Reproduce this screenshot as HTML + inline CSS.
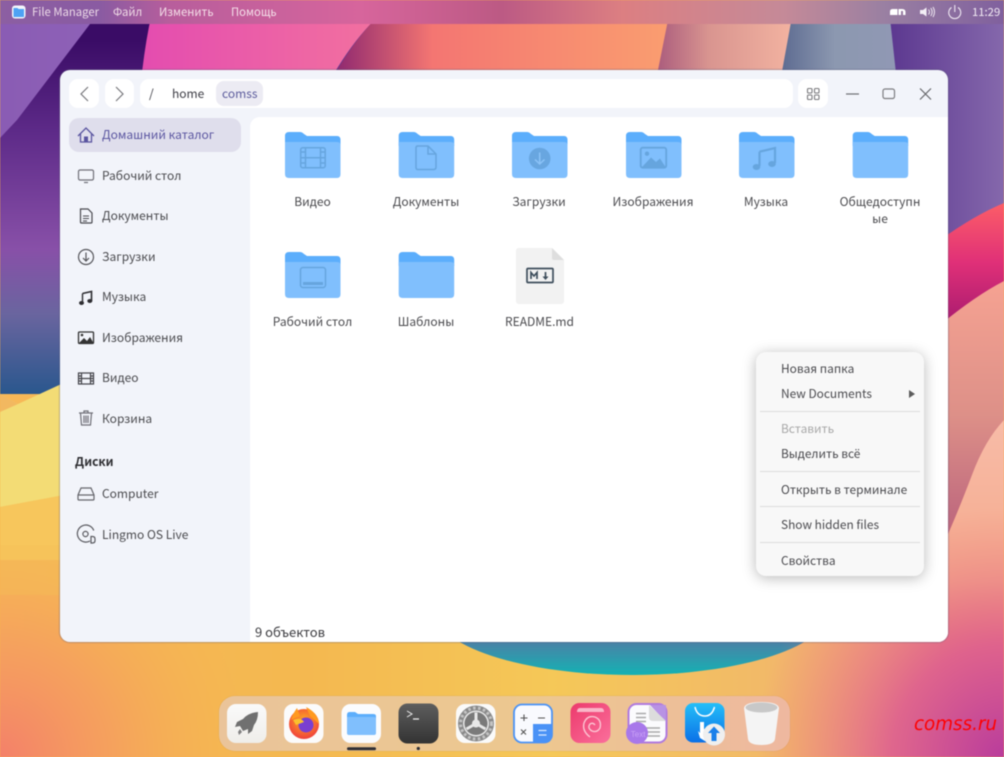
<!DOCTYPE html>
<html lang="ru"><head><meta charset="utf-8"><title>File Manager</title>
<style>
html,body{margin:0;padding:0;width:1004px;height:757px;overflow:hidden;background:#f5b050}
body{position:relative;font-family:"Noto Sans CJK SC","Liberation Sans",sans-serif;font-size:12px;color:#4a4a4e}
#root{position:absolute;left:0;top:0;width:1004px;height:757px;overflow:hidden;filter:blur(.4px)}
.a{position:absolute;white-space:nowrap}
.t{position:absolute;white-space:nowrap;line-height:18px;height:18px;margin-top:1px}
.m{font-size:11.3px;top:3px;margin-top:0}
.c{font-size:11.9px}
.l{width:100px;text-align:center}
#bg,#ic{position:absolute;left:0;top:0}
.btn{position:absolute;background:#fff;border-radius:9px}
</style></head><body><div id="root">
<svg id="bg" width="1004" height="757" viewBox="0 0 1004 757">
<defs>
<linearGradient id="g0" x1="0" y1="0" x2="1" y2="0"><stop offset="0" stop-color="#8a5cb4"/><stop offset="1" stop-color="#8f62b8"/></linearGradient>
<linearGradient id="gd" x1="0" y1="40" x2="0" y2="400" gradientUnits="userSpaceOnUse"><stop offset="0" stop-color="#3a0c66"/><stop offset=".25" stop-color="#5d2a88"/><stop offset=".58" stop-color="#8850a8"/><stop offset=".76" stop-color="#6a659f"/><stop offset="1" stop-color="#25568c"/></linearGradient>
<linearGradient id="gp" x1="140" y1="0" x2="370" y2="0" gradientUnits="userSpaceOnUse"><stop offset="0" stop-color="#e44cb0"/><stop offset="1" stop-color="#f270a0"/></linearGradient>
<linearGradient id="go" x1="335" y1="0" x2="660" y2="0" gradientUnits="userSpaceOnUse"><stop offset="0" stop-color="#8e2870"/><stop offset=".3" stop-color="#f47672"/><stop offset="1" stop-color="#fa9c70"/></linearGradient>
<linearGradient id="gs" x1="655" y1="0" x2="790" y2="0" gradientUnits="userSpaceOnUse"><stop offset="0" stop-color="#a95a7c"/><stop offset=".4" stop-color="#d99590"/><stop offset="1" stop-color="#f2b2a0"/></linearGradient>
<linearGradient id="gb" x1="780" y1="0" x2="890" y2="0" gradientUnits="userSpaceOnUse"><stop offset="0" stop-color="#5c6a90"/><stop offset=".5" stop-color="#8c98b0"/><stop offset="1" stop-color="#9098b4"/></linearGradient>
<linearGradient id="gv" x1="890" y1="0" x2="1004" y2="0" gradientUnits="userSpaceOnUse"><stop offset="0" stop-color="#5c3890"/><stop offset="1" stop-color="#8568ac"/></linearGradient>
<linearGradient id="gr" x1="0" y1="205" x2="0" y2="320" gradientUnits="userSpaceOnUse"><stop offset="0" stop-color="#fb5c68"/><stop offset=".5" stop-color="#e03078"/><stop offset="1" stop-color="#ac1c70"/></linearGradient>
<linearGradient id="gsa" x1="0" y1="285" x2="0" y2="545" gradientUnits="userSpaceOnUse"><stop offset="0" stop-color="#f5a292"/><stop offset=".5" stop-color="#dd9088"/><stop offset="1" stop-color="#b8607c"/></linearGradient>
<linearGradient id="gl" x1="0" y1="420" x2="0" y2="690" gradientUnits="userSpaceOnUse"><stop offset="0" stop-color="#f8bca8"/><stop offset=".6" stop-color="#f5aa8c"/><stop offset=".82" stop-color="#f08c7a"/><stop offset="1" stop-color="#f08478" stop-opacity="0"/></linearGradient>
<linearGradient id="gb2" x1="0" y1="0" x2="1004" y2="0" gradientUnits="userSpaceOnUse"><stop offset="0" stop-color="#f7b858"/><stop offset=".3" stop-color="#f4b850"/><stop offset=".55" stop-color="#f5c858"/><stop offset=".76" stop-color="#f2ba68"/><stop offset=".88" stop-color="#f2a47c"/><stop offset="1" stop-color="#ec7c7e"/></linearGradient>
<linearGradient id="gt" x1="0" y1="642" x2="0" y2="675" gradientUnits="userSpaceOnUse"><stop offset="0" stop-color="#4a82a6"/><stop offset="1" stop-color="#14b2b4"/></linearGradient>
<linearGradient id="gm" x1="0" y1="0" x2="1" y2="0"><stop offset="0" stop-color="#8c5fa2"/><stop offset=".1" stop-color="#8a5ba2"/><stop offset=".17" stop-color="#b85e9c"/><stop offset=".36" stop-color="#d7659c"/><stop offset=".5" stop-color="#bc5a84"/><stop offset=".62" stop-color="#dc7f82"/><stop offset=".78" stop-color="#c58a98"/><stop offset=".88" stop-color="#9a80a2"/><stop offset="1" stop-color="#80609e"/></linearGradient>
<radialGradient id="rl" cx="0" cy="757" r="250" gradientUnits="userSpaceOnUse"><stop offset="0" stop-color="#f4806a"/><stop offset=".45" stop-color="#f59a60" stop-opacity=".75"/><stop offset="1" stop-color="#f6b050" stop-opacity="0"/></radialGradient>
<radialGradient id="rr" cx="1004" cy="757" r="250" gradientUnits="userSpaceOnUse"><stop offset="0" stop-color="#b93c9c"/><stop offset=".45" stop-color="#dc5c90" stop-opacity=".85"/><stop offset="1" stop-color="#f08478" stop-opacity="0"/></radialGradient>
</defs>
<rect width="1004" height="757" fill="url(#gb2)"/>
<!-- top bands -->
<rect x="0" y="0" width="1004" height="420" fill="url(#gv)"/>
<path d="M795 0L770 110H900L888 0Z" fill="url(#gb)"/>
<path d="M668 0L640 110H775L795 0Z" fill="url(#gs)"/>
<path d="M385 10Q350 40 315 110H650L672 0H385Z" fill="url(#go)"/>
<path d="M152 0Q142 40 138 110H315Q345 45 385 10L395 0Z" fill="url(#gp)"/>
<path d="M0 130L105 0H155Q142 50 138 120V420H0Z" fill="url(#gd)"/>
<path d="M0 0H108L90 24L17 120L0 138Z" fill="url(#g0)"/>
<!-- left lower -->
<rect x="0" y="394" width="70" height="363" fill="url(#gb2)"/>
<rect x="0" y="390" width="500" height="367" fill="url(#rl)"/>
<path d="M0 394L18 404L70 380V494L0 507Z" fill="#f3dc75"/>
<path d="M0 394L18 404L0 412Z" fill="#f2b860"/>
<path d="M0 507L70 494V560H0Z" fill="#f7c65c"/>
<rect x="0" y="545" width="70" height="50" fill="#f6bd58" opacity=".4"/>
<!-- right waves -->
<path d="M940 240Q975 215 1004 203V290L940 325Z" fill="url(#gr)"/>
<path d="M940 325Q975 296 1004 281V425Q985 440 972 475Q955 520 940 552Z" fill="url(#gsa)"/>
<rect x="900" y="420" width="104" height="280" fill="url(#gb2)" clip-path="path('M104 0Q85 20 72 55Q55 100 40 132V280H104Z')"/>
<path d="M1004 420Q985 440 972 475Q955 520 940 552V690H1004Z" fill="url(#gl)"/>
<ellipse cx="632" cy="610" rx="198" ry="65" fill="url(#gt)"/>
<rect x="754" y="507" width="250" height="250" fill="url(#rr)"/>
<rect width="1004" height="24" fill="url(#gm)"/>
</svg>

<!-- menu bar -->
<div class="t m" style="left:32px;color:#eddbe8">File Manager</div>
<div class="t m" style="left:113px;color:#f0dbe6">Файл</div>
<div class="t m" style="left:159px;color:#f4dfe8">Изменить</div>
<div class="t m" style="left:231px;color:#f5e1ea">Помощь</div>
<div class="t m" style="left:972px;color:#f2ebf4">11:29</div>

<!-- window -->
<div class="a" style="left:60px;top:70px;width:888px;height:572px;background:#f2f4fa;border-radius:10px;box-shadow:0 0 1px 1px rgba(90,90,120,.35);overflow:hidden">
  <div class="a" style="left:190px;top:47px;width:698px;height:525px;background:#fff;border-top-left-radius:10px"></div>
</div>
<div class="btn" style="left:69px;top:79px;width:30px;height:29px"></div>
<div class="btn" style="left:105px;top:79px;width:29px;height:29px"></div>
<div class="btn" style="left:140px;top:79px;width:653px;height:29px"></div>
<div class="btn" style="left:798px;top:79px;width:30px;height:29px"></div>
<div class="a" style="left:216px;top:81px;width:47px;height:25px;background:#ecebf3;border-radius:8px"></div>
<div class="t" style="left:149px;top:84px;color:#3c3c44">/</div>
<div class="t" style="left:172px;top:84px;color:#3c3c44">home</div>
<div class="t" style="left:222px;top:84px;color:#5b5b9c">comss</div>

<!-- sidebar -->
<div class="a" style="left:69px;top:118px;width:172px;height:34px;background:#dfdeec;border-radius:10px"></div>
<div class="t" style="left:102px;top:125px;color:#5a55a0">Домашний каталог</div>
<div class="t" style="left:102px;top:166px">Рабочий стол</div>
<div class="t" style="left:102px;top:206px">Документы</div>
<div class="t" style="left:102px;top:247px">Загрузки</div>
<div class="t" style="left:102px;top:287px">Музыка</div>
<div class="t" style="left:102px;top:328px">Изображения</div>
<div class="t" style="left:102px;top:368px">Видео</div>
<div class="t" style="left:102px;top:409px">Корзина</div>
<div class="t" style="left:75px;top:452px;font-weight:700;color:#2e2e32">Диски</div>
<div class="t" style="left:102px;top:484px">Computer</div>
<div class="t" style="left:102px;top:525px">Lingmo OS Live</div>

<!-- file labels -->
<div class="t l" style="left:262.500px;top:192px">Видео</div>
<div class="t l" style="left:376px;top:192px">Документы</div>
<div class="t l" style="left:489px;top:192px">Загрузки</div>
<div class="t l" style="left:603px;top:192px">Изображения</div>
<div class="t l" style="left:716px;top:192px">Музыка</div>
<div class="t l" style="left:830px;top:192px">Общедоступн</div>
<div class="t l" style="left:830px;top:209px">ые</div>
<div class="t l" style="left:262.500px;top:312px">Рабочий стол</div>
<div class="t l" style="left:376px;top:312px">Шаблоны</div>
<div class="t l" style="left:489.500px;top:312px">README.md</div>
<div class="t" style="left:255px;top:623px;margin-top:0;color:#3c3c40;font-size:13px">9 объектов</div>

<!-- context menu -->
<div class="a" style="left:756px;top:352px;width:168px;height:224px;background:#f8f8f8;border-radius:10px;box-shadow:0 2px 14px rgba(0,0,0,.28)"></div>
<div class="t c" style="left:781px;top:359px">Новая папка</div>
<div class="t c" style="left:781px;top:384px">New Documents</div>
<div class="t c" style="left:781px;top:419px;color:#a8a8a8">Вставить</div>
<div class="t c" style="left:781px;top:444px">Выделить всё</div>
<div class="t c" style="left:781px;top:480px">Открыть в терминале</div>
<div class="t c" style="left:781px;top:515px">Show hidden files</div>
<div class="t c" style="left:781px;top:551px">Свойства</div>
<div class="a" style="left:760px;top:411px;width:160px;height:1px;background:#dcdcdc"></div>
<div class="a" style="left:760px;top:471px;width:160px;height:1px;background:#dcdcdc"></div>
<div class="a" style="left:760px;top:506px;width:160px;height:1px;background:#dcdcdc"></div>
<div class="a" style="left:760px;top:542px;width:160px;height:1px;background:#dcdcdc"></div>

<!-- dock -->
<div class="a" style="left:219px;top:696px;width:571px;height:55px;background:linear-gradient(90deg,#eac49a,#edc88f 55%,#eeb8a0);border-radius:16px;box-shadow:0 0 1px rgba(120,80,40,.3)"></div>

<svg id="ic" width="1004" height="757" viewBox="0 0 1004 757">
<defs>
<linearGradient id="dt" x1="0" y1="0" x2="0" y2="1"><stop offset="0" stop-color="#5e5e5e"/><stop offset="1" stop-color="#333"/></linearGradient>
<linearGradient id="dp" x1="0" y1="0" x2="1" y2="1"><stop offset="0" stop-color="#ec3a6c"/><stop offset="1" stop-color="#fb6f9c"/></linearGradient>
<linearGradient id="ds" x1="0" y1="0" x2="0" y2="1"><stop offset="0" stop-color="#25c0f8"/><stop offset="1" stop-color="#0a70e8"/></linearGradient>
<linearGradient id="dr" x1="0" y1="0" x2="0" y2="1"><stop offset="0" stop-color="#fafafa"/><stop offset="1" stop-color="#efeeea"/></linearGradient>
<radialGradient id="ff" cx=".5" cy=".4" r=".6"><stop offset="0" stop-color="#ffb020"/><stop offset="1" stop-color="#f0403c"/></radialGradient>
<g id="fo"><path d="M0 4Q0 0 4 0H15Q17 0 19 2L22 4H52Q55.500 4 55.500 8V14H0Z" fill="#5caefc"/><path d="M0 10H52Q55.500 10 55.500 13V42Q55.500 46 52 46H4Q0 46 0 42Z" fill="#80bffd"/></g>
</defs>

<!-- tray / menu app icon -->
<rect x="12" y="5.500" width="13.500" height="13" rx="3" fill="#f3f6fb"/>
<path d="M13.500 8H17.500L18.500 9H24V17H13.500Z" fill="#4ea2f4"/>
<path d="M890 15V11.500Q890 9 893 9H897.500V15ZM898.500 15V9H902Q905.500 9 905.500 12V15H903V11H901V15Z" fill="#fff"/>
<path d="M920 10H923L926.500 7.500V16.500L923 14H920Z" fill="#f3eef5"/>
<path d="M928.500 9.500Q930.500 12 928.500 14.500M930.800 8Q933.500 12 930.800 16M933 7Q936 12 933 17" fill="none" stroke="#efe8f2" stroke-width="1"/>
<path d="M951.500 7.500A6 6 0 1 0 958 7.500M954.800 5V12" fill="none" stroke="#efe8f2" stroke-width="1.100"/>

<!-- toolbar icons -->
<path d="M88 87L81 94L88 101" fill="none" stroke="#77777c" stroke-width="1.200"/>
<path d="M116 87L123 94L116 101" fill="none" stroke="#77777c" stroke-width="1.200"/>
<g fill="none" stroke="#7a7a7e" stroke-width="1.100"><rect x="807.500" y="88.500" width="4.500" height="4.500" rx="1"/><rect x="814.500" y="88.500" width="4.500" height="4.500" rx="1"/><rect x="807.500" y="95" width="4.500" height="4.500" rx="1"/><rect x="814.500" y="95" width="4.500" height="4.500" rx="1"/></g>
<path d="M846 94H859" stroke="#6e6e72" stroke-width="1.200"/>
<rect x="883" y="89" width="11.500" height="9.500" rx="2" fill="none" stroke="#7c7c80" stroke-width="1.200"/>
<path d="M920 88.500L931 99.500M931 88.500L920 99.500" stroke="#66666a" stroke-width="1.200"/>

<!-- sidebar icons -->
<g fill="none" stroke="#5a55a0" stroke-width="1.300"><path d="M78 136L86 128L94 136"/><path d="M80.500 134V142H91.500V134"/></g><rect x="84" y="136.500" width="4" height="5.500" fill="#5a55a0"/>
<g fill="none" stroke="#707078" stroke-width="1.200"><rect x="78.500" y="170" width="15" height="10" rx="1.500"/><path d="M84 182.500H88"/></g>
<g fill="none" stroke="#4a4a50" stroke-width="1.200"><path d="M80.500 209H88L92 213V222Q92 223 91 223H81.500Q80.500 223 80.500 222Z"/><path d="M83 216H89M83 218.500H89M83 221H87" stroke-width=".9"/></g>
<g fill="none" stroke="#55555a" stroke-width="1.200"><circle cx="86" cy="257" r="7.500"/><path d="M86 252.500V260.500M83 258L86 261L89 258"/></g>
<path d="M82.500 293.500L91.500 291.500V301" fill="none" stroke="#2e2e32" stroke-width="1.600"/><ellipse cx="81.500" cy="303" rx="2.500" ry="2" fill="#2e2e32"/><ellipse cx="89.800" cy="301" rx="2.500" ry="2" fill="#2e2e32"/><path d="M82.500 293.500V303" stroke="#2e2e32" stroke-width="1.400"/>
<rect x="78.500" y="332" width="15" height="11.500" rx="1" fill="none" stroke="#333" stroke-width="1.300"/><circle cx="82" cy="335" r="1.300" fill="#333"/><path d="M79 343L84 338L87 341L90 337L93.500 343Z" fill="#333"/>
<g fill="none" stroke="#44444a" stroke-width="1.200"><rect x="78.500" y="373" width="15" height="11"/><path d="M81.500 373V384M90.500 373V384M78.500 378.500H93.500M78.500 376H81.500M78.500 381H81.500M90.500 376H93.500M90.500 381H93.500"/></g>
<g fill="none" stroke="#707078" stroke-width="1.200"><path d="M79 413H93M84 413V411H88V413M80.500 413L81.500 425H90.500L91.500 413M84 415.500V423M86 415.500V423M88 415.500V423"/></g>
<g fill="none" stroke="#66666c" stroke-width="1.200"><path d="M81 488H91L94 495V499Q94 500 93 500H79Q78 500 78 499V495ZM78 495H94"/></g>
<g fill="none" stroke="#5a5a60" stroke-width="1.200"><path d="M90 541A8.500 8.500 0 1 1 93.800 530.500"/><circle cx="85.500" cy="534" r="2.600"/><path d="M91 536.500H92.500Q95 536.500 95 539V540.500Q95 543 92.500 543H91Z"/></g>

<!-- folders -->
<use href="#fo" x="285" y="132"/><use href="#fo" x="398.700" y="132"/><use href="#fo" x="512" y="132"/><use href="#fo" x="626" y="132"/><use href="#fo" x="739" y="132"/><use href="#fo" x="852.700" y="132"/>
<use href="#fo" x="285" y="252"/><use href="#fo" x="398.700" y="252"/>
<!-- folder glyphs -->
<g fill="none" stroke="#66a5de" stroke-width="1.500"><rect x="300.700" y="147.700" width="24.500" height="20" rx="2"/><path d="M305.500 148V167.500M320.500 148V167.500M305.500 157.700H320.500M301 152H305.500M301 157.700H305.500M301 163H305.500M320.500 152H325M320.500 157.700H325M320.500 163H325"/></g>
<path d="M417.500 146H428L436 154V167Q436 169.500 433.500 169.500H417.500Q416 169.500 416 167V148Q416 146 417.500 146ZM428 146V154H436" fill="none" stroke="#66a5de" stroke-width="1.500"/>
<circle cx="539.700" cy="158.500" r="10.800" fill="#68a6e0"/><path d="M539.700 152.500V164M535 159.500L539.700 164L544.500 159.500" fill="none" stroke="#8cc3f8" stroke-width="1.500"/>
<rect x="640.700" y="147.700" width="25.500" height="20" rx="2" fill="none" stroke="#66a5de" stroke-width="1.800"/><circle cx="647" cy="153.700" r="2.200" fill="#66a5de"/><path d="M642 167L651 157.500L656 162L660 158.500L665.500 167Z" fill="#66a5de"/>
<path d="M759.500 151.700L775 148V163M759.500 151.700V166" fill="none" stroke="#66a5de" stroke-width="2.200"/><ellipse cx="756.500" cy="167" rx="3.800" ry="3" fill="#66a5de"/><ellipse cx="772" cy="164" rx="3.800" ry="3" fill="#66a5de"/>
<rect x="300.500" y="267.500" width="25" height="20" rx="2.500" fill="none" stroke="#66a5de" stroke-width="1.500"/><rect x="303" y="282" width="20" height="3" fill="#66a5de"/>

<!-- README -->
<path d="M518.500 248H552L564 260V301Q564 304 561 304H519Q516 304 516 301V251Q516 248 518.500 248Z" fill="#f2f2f2"/>
<path d="M552 248L564 260H554Q552 260 552 258Z" fill="#dedede"/>
<rect x="527" y="268.500" width="26" height="14" rx="1" fill="none" stroke="#3e4e5c" stroke-width="1.700"/>
<path d="M531 279V272.500L534 276L537 272.500V279" fill="none" stroke="#3e4e5c" stroke-width="1.700"/>
<path d="M545.500 272V277.500" stroke="#3e4e5c" stroke-width="1.700"/><path d="M542.500 276.500H548.500L545.500 280Z" fill="#3e4e5c"/>
<!-- submenu arrow -->
<path d="M909 390L915 394L909 398Z" fill="#5c5c5c"/>

<!-- dock icons -->
<rect x="227" y="704" width="39.500" height="39" rx="9" fill="url(#dr)"/>
<path d="M258 712Q248 713 243 719L237 722L235 727L240 726L243 731L248 729L248 734L252 731L254 725Q258 720 258 712Z" fill="#707070"/><path d="M238 732L240 729L242 732L239 735Z" fill="#808080"/>
<rect x="284" y="704" width="39.500" height="39" rx="9" fill="#fbfbfb"/>
<circle cx="304" cy="724" r="15" fill="url(#ff)"/><path d="M297 708Q292 715 291 720L300 716ZM306 707Q318 713 319 724L310 716Z" fill="#ff9a20"/><circle cx="306" cy="725" r="7.500" fill="#7a3fd0"/><path d="M293 720Q301 717 304 722L296 725Z" fill="#fbc02d"/>
<rect x="341.500" y="704" width="39.500" height="39" rx="9" fill="#fbfcfe"/>
<path d="M347 715Q347 712 349.500 712H355L358 714H373Q376 714 376 716V720H347Z" fill="#5caefc"/><path d="M347 717H374Q376 717 376 719V733Q376 735 374 735H349Q347 735 347 733Z" fill="#80bffd"/>
<rect x="398.500" y="703.500" width="40" height="40" rx="9" fill="url(#dt)"/>
<path d="M407 711L412 714L407 717" fill="none" stroke="#eee" stroke-width="1"/><path d="M413 719H419" stroke="#eee" stroke-width="1.300"/>
<rect x="456" y="704" width="39.500" height="39" rx="9" fill="#fafafa"/>
<circle cx="476" cy="723.500" r="18" fill="#8a8a8a"/><circle cx="476" cy="723.500" r="15.500" fill="none" stroke="#c4c4c4" stroke-width="3" stroke-dasharray="2.500 2.500"/><circle cx="476" cy="723.500" r="13" fill="#e8e8e8"/><circle cx="476" cy="723.500" r="11.500" fill="#7a7a7a"/>
<path d="M476 723.500V712.500M476 723.500L466.500 729M476 723.500L485.500 729" stroke="#e8e8e8" stroke-width="3"/><circle cx="476" cy="723.500" r="4" fill="#e8e8e8"/>
<rect x="514" y="704.500" width="38" height="38" rx="8" fill="#f9fafe" stroke="#4a92f6" stroke-width="1.800"/>
<path d="M533 724H552V735Q552 743 545 743H533Z" fill="#4a92f6"/><path d="M524 714.500V721M520.500 718H527.500M538 718H545M521 729.500L526 734.500M526 729.500L521 734.500" stroke="#555" stroke-width="1.100"/><path d="M538.500 730.500H546.500M538.500 735H546.500" stroke="#dcebff" stroke-width="1.300"/>
<rect x="570.500" y="703" width="40" height="40" rx="9" fill="url(#dp)"/>
<path d="M577 712Q577 708 580 708H601Q604 708 604 712Z" fill="#f9b6c8"/>
<path d="M590 737Q582 731 584 723Q587 715 595 717Q602 720 600 728Q597 733 592 731Q587 728 590 724Q593 722 595 725" fill="none" stroke="#fcc4d2" stroke-width="1.400"/>
<rect x="628.500" y="704" width="38" height="38.500" rx="8" fill="#fbfbfd" stroke="#b07ade" stroke-width="2"/>
<path d="M650 705L666 722V705Z" fill="#b892e4"/><path d="M649 705V717Q649 721 653 721H666" fill="#dcdcdc"/>
<path d="M636 713.500H646M636 717.500H646M636 721.500H646M638 728H660M638 732H660M638 736H660" stroke="#aaa" stroke-width="1.600"/>
<circle cx="637" cy="733" r="11" fill="#a878ea"/>
<rect x="685" y="703" width="39.500" height="39.500" rx="8" fill="url(#ds)"/>
<path d="M695 707Q697 716 705 716Q712 716 714.500 707" fill="none" stroke="#fff" stroke-width="1.500"/>
<path d="M700 722H704V729L708 732L705 741L700 738L698 731L700 733Z" fill="#fff"/>
<circle cx="714" cy="734.500" r="11" fill="#efefef"/><path d="M714 726.500L720 733H716.500V741H711.500V733H708Z" fill="#1a80ea"/>
<path d="M744 708Q745 702 761.500 702Q778 702 779 708L775 739Q774 745 761.500 745Q749 745 748 739Z" fill="#f4f4f4"/><ellipse cx="761.500" cy="707.500" rx="16" ry="5" fill="#c8c8c8"/>
<rect x="347" y="747.200" width="29" height="3" rx="1.500" fill="#2e2e34"/><circle cx="418.300" cy="748.500" r="1.600" fill="#2e2e34"/>
<text x="630.800" y="737" font-size="8" fill="#c9a2f6" font-family="Liberation Sans, sans-serif">Text</text>
</svg>

<div class="t" style="left:914px;top:712px;margin-top:0;height:26px;line-height:26px;color:#ff0000;font-family:'DejaVu Sans',sans-serif;font-style:italic;font-size:18.300px">comss.ru</div>
</div></body></html>
